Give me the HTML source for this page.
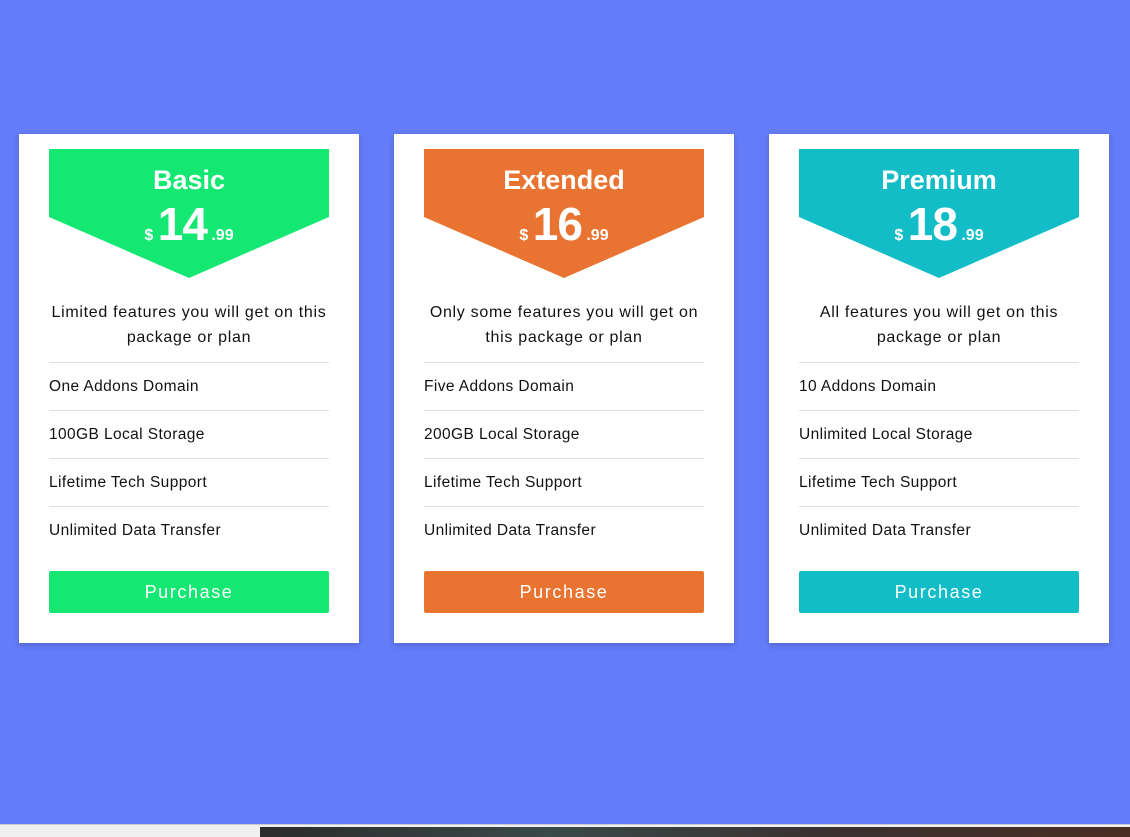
<!DOCTYPE html>
<html><head><style>
*{margin:0;padding:0;box-sizing:border-box}
body{width:1130px;height:837px;background:#647cf8;font-family:"Liberation Sans",sans-serif;position:relative;overflow:hidden}
.card{position:absolute;top:134px;width:340px;height:509px;background:#fff;box-shadow:0 2px 6px rgba(0,0,0,.2)}
.hdr{position:absolute;left:30px;top:15px;width:280px;height:129px;clip-path:polygon(0 0,100% 0,100% 68px,50% 129px,0 68px)}
.title{position:absolute;top:16px;width:280px;text-align:center;color:#fff;font-weight:bold;font-size:27px}
.price{position:absolute;top:48px;width:280px;text-align:center;color:#fff;font-weight:bold}
.price .d{font-size:16px}.price .n{font-size:46px;letter-spacing:-1px}.price .c{font-size:16px}
.desc{position:absolute;top:166px;left:25px;width:290px;text-align:center;font-size:16px;line-height:25px;color:#111;letter-spacing:.7px}
.list{position:absolute;top:228px;left:30px;width:280px;border-top:1px solid #ddd}
.list div{height:48px;line-height:47px;font-size:15.5px;color:#111;border-bottom:1px solid #ddd;letter-spacing:.4px}
.list div:last-child{border-bottom:none}
.btn{position:absolute;top:437px;left:30px;width:280px;height:42px;border-radius:2px;color:#fff;font-size:18px;text-align:center;line-height:42px;letter-spacing:1.6px}
.bar{position:absolute;left:0;top:824px;width:1130px;height:13px;background:#f0f0f0;border-top:1px solid #ccc}
.task{position:absolute;left:260px;top:827px;width:870px;height:10px;background:linear-gradient(90deg,#2c2c2c,#3a4a48,#3a3030,#4a2e22)}
</style></head><body>
<div class="card" style="left:19px">
 <div class="hdr" style="background:#15e872"><div class="title">Basic</div><div class="price"><span class="d">$ </span><span class="n">14</span><span class="c"> .99</span></div></div>
 <div class="desc">Limited features you will get on this package or plan</div>
 <div class="list"><div>One Addons Domain</div><div>100GB Local Storage</div><div>Lifetime Tech Support</div><div>Unlimited Data Transfer</div></div>
 <div class="btn" style="background:#15e872">Purchase</div>
</div>
<div class="card" style="left:394px">
 <div class="hdr" style="background:#e97431"><div class="title">Extended</div><div class="price"><span class="d">$ </span><span class="n">16</span><span class="c"> .99</span></div></div>
 <div class="desc">Only some features you will get on this package or plan</div>
 <div class="list"><div>Five Addons Domain</div><div>200GB Local Storage</div><div>Lifetime Tech Support</div><div>Unlimited Data Transfer</div></div>
 <div class="btn" style="background:#e97431">Purchase</div>
</div>
<div class="card" style="left:769px">
 <div class="hdr" style="background:#13bdc7"><div class="title">Premium</div><div class="price"><span class="d">$ </span><span class="n">18</span><span class="c"> .99</span></div></div>
 <div class="desc">All features you will get on this package or plan</div>
 <div class="list"><div>10 Addons Domain</div><div>Unlimited Local Storage</div><div>Lifetime Tech Support</div><div>Unlimited Data Transfer</div></div>
 <div class="btn" style="background:#13bdc7">Purchase</div>
</div>
<div class="bar"></div><div class="task"></div>
</body></html>
